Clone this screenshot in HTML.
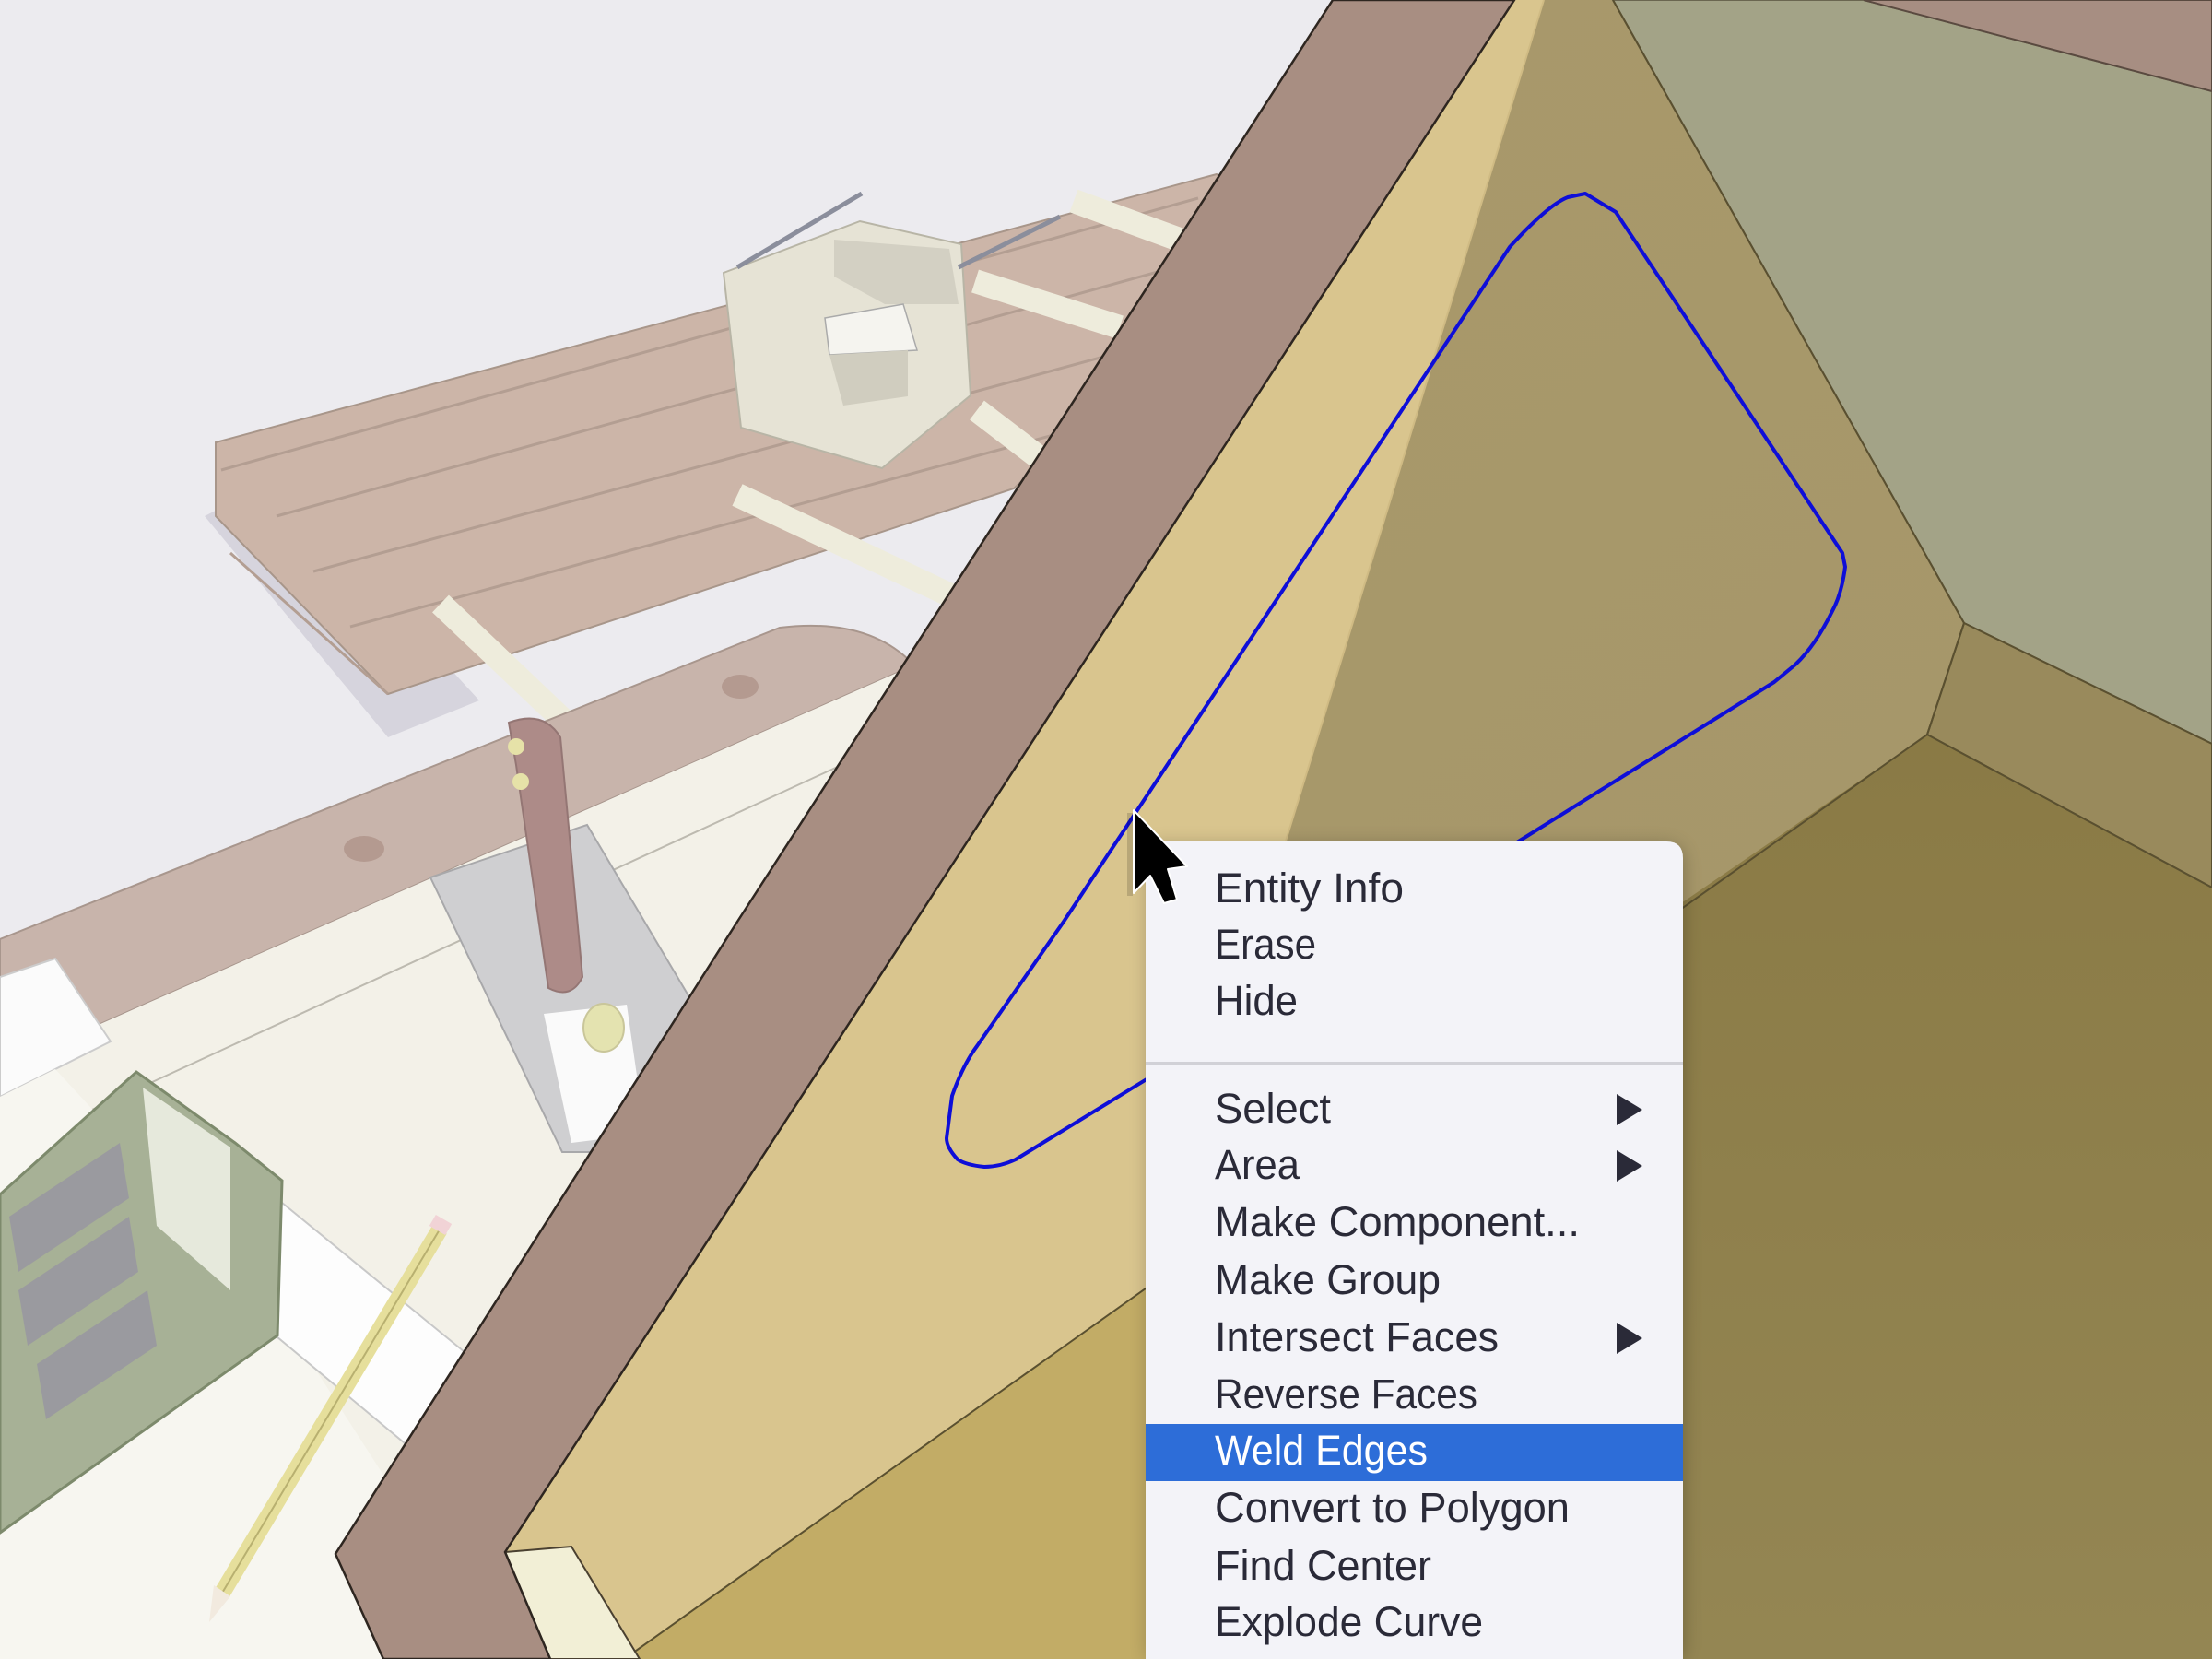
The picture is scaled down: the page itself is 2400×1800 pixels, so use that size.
<!DOCTYPE html>
<html><head><meta charset="utf-8"><style>
html,body{margin:0;padding:0;width:2400px;height:1800px;overflow:hidden;background:#ebeaef}
svg{display:block}
</style></head><body>
<svg width="2400" height="1800" viewBox="0 0 2400 1800" xmlns="http://www.w3.org/2000/svg">
<defs>
<linearGradient id="tan" x1="0" y1="0" x2="1" y2="1"><stop offset="0" stop-color="#a99a6c"/><stop offset="1" stop-color="#a59568"/></linearGradient>
<linearGradient id="olive" x1="0" y1="0" x2="0" y2="1"><stop offset="0" stop-color="#8a7a45"/><stop offset="1" stop-color="#948653"/></linearGradient>
<filter id="sh" x="-10%" y="-10%" width="120%" height="120%"><feGaussianBlur stdDeviation="10"/></filter>
</defs>
<rect width="2400" height="1800" fill="#ecebef"/>
<polygon points="222,560 421,800 520,760 300,520" fill="#d6d4dd"/>
<polygon points="234,480 1320,189 1400,250 1100,530 421,753 234,560" fill="#ccb5a8" stroke="#a8968a" stroke-width="2"/>
<g stroke="#b39e92" stroke-width="3" fill="none">
<line x1="240" y1="510" x2="1300" y2="215"/>
<line x1="300" y1="560" x2="1310" y2="280"/>
<line x1="340" y1="620" x2="1260" y2="370"/>
<line x1="380" y1="680" x2="1150" y2="470"/>
<line x1="250" y1="600" x2="421" y2="753"/>
</g>
<g stroke="#eeecdc" stroke-width="26" stroke-linecap="butt">
<line x1="478" y1="655" x2="615" y2="785"/>
<line x1="800" y1="537" x2="1040" y2="650"/>
<line x1="1060" y1="445" x2="1145" y2="510"/>
<line x1="1165" y1="218" x2="1285" y2="262"/>
<line x1="1058" y1="305" x2="1215" y2="355"/>
</g>
<polygon points="785,296 933,240 1043,265 1053,429 957,508 804,464" fill="#e6e3d5" stroke="#b8b5a6" stroke-width="2"/>
<polygon points="905,260 1030,270 1040,330 960,330 905,300" fill="#d3d0c3"/>
<polygon points="895,345 980,330 995,380 900,385" fill="#f5f4ef" stroke="#aaa" stroke-width="1.5"/>
<polygon points="900,385 985,380 985,430 915,440" fill="#d0cdbf"/>
<g stroke="#8b8e9c" stroke-width="5"><line x1="800" y1="290" x2="935" y2="210"/><line x1="1040" y1="290" x2="1150" y2="235"/></g>
<path d="M0,1019 L846,681 Q936,670 985,715 L980,727 L0,1159 Z" fill="#c8b4ab" stroke="#a8968d" stroke-width="2"/>
<path d="M0,1159 L980,727 L1060,700 L1200,640 L1200,1800 L0,1800 Z" fill="#f3f1e8"/>
<line x1="0" y1="1250" x2="913" y2="830" stroke="#bdbab0" stroke-width="2"/>
<ellipse cx="803" cy="745" rx="20" ry="13" fill="#b49a90"/>
<ellipse cx="395" cy="921" rx="22" ry="14" fill="#b49a90"/>
<polygon points="467,952 637,895 748,1082 650,1250 610,1250" fill="#cfcfd1" stroke="#a8a8aa" stroke-width="2"/>
<polygon points="590,1100 680,1090 700,1230 620,1240" fill="#fafafa"/>
<path d="M552,784 Q590,770 608,800 L632,1060 Q620,1085 595,1072 L560,830 Z" fill="#ad8b88" stroke="#947674" stroke-width="2"/>
<circle cx="560" cy="810" r="9" fill="#e6e2a8"/><circle cx="565" cy="848" r="9" fill="#e6e2a8"/>
<ellipse cx="655" cy="1115" rx="22" ry="26" fill="#e4e3b0" stroke="#c9c69a" stroke-width="2"/>
<polygon points="0,1060 60,1040 120,1130 0,1190" fill="#fbfbfb" stroke="#ccc" stroke-width="2"/>
<polygon points="0,1190 60,1160 300,1420 480,1700 420,1800 0,1800" fill="#f7f6f0"/>
<polygon points="300,1300 520,1480 480,1600 300,1450" fill="#fdfdfd" stroke="#c8c8c8" stroke-width="2"/>
<polygon points="0,1296 148,1163 255,1240 306,1281 301,1449 0,1663" fill="#a7b196" stroke="#7d8a6c" stroke-width="3"/>
<polygon points="155,1180 250,1245 250,1400 170,1330" fill="#e6e9dc"/>
<g fill="#9a9a9f"><polygon points="10,1320 130,1240 140,1300 20,1380"/><polygon points="20,1400 140,1320 150,1380 30,1460"/><polygon points="40,1480 160,1400 170,1460 50,1540"/></g>
<line x1="477" y1="1334" x2="240" y2="1730" stroke="#e6df9c" stroke-width="18"/>
<line x1="477" y1="1334" x2="240" y2="1730" stroke="#b8b070" stroke-width="2"/>
<polygon points="232,1720 250,1732 227,1760" fill="#f2eadf"/>
<rect x="468" y="1322" width="20" height="14" fill="#f1d3d6" transform="rotate(30 478 1329)"/>
<polygon points="1643,0 2400,0 2400,1800 600,1800 548,1684 993,1000" fill="url(#tan)"/>
<polygon points="1750,0 2022,0 2400,99 2400,807 2131,676" fill="#a3a387" stroke="#6a6650" stroke-width="2"/>
<polygon points="2022,0 2400,0 2400,99" fill="#a78e82" stroke="#5a4a40" stroke-width="2"/>
<polygon points="2131,676 2400,807 2400,963 2091,797" fill="#998a5c" stroke="#5a5030" stroke-width="2"/>
<polygon points="1250,1393 1830,976 1826,1800 600,1800 683,1796" fill="#c2ac66"/>
<polygon points="2091,797 2400,963 2400,1800 1800,1800 1800,995 1830,976" fill="url(#olive)"/>
<line x1="2091" y1="797" x2="2400" y2="963" stroke="#5a5030" stroke-width="2"/>
<polygon points="1643,0 1675,0 1247,1395 683,1796 620,1678 548,1684 993,1000" fill="#d9c58e"/>
<line x1="1675" y1="0" x2="1247" y2="1395" stroke="#d0bb84" stroke-width="2"/>
<line x1="1750" y1="0" x2="2131" y2="676" stroke="#5a5030" stroke-width="2"/>
<line x1="2131" y1="676" x2="2091" y2="797" stroke="#5a5030" stroke-width="2"/>
<line x1="2091" y1="797" x2="1250" y2="1393" stroke="#5a5030" stroke-width="2"/>
<line x1="1250" y1="1393" x2="683" y2="1796" stroke="#5a5030" stroke-width="2"/>
<polygon points="548,1684 620,1678 694,1800 597,1800" fill="#f2efd6" stroke="#4a4030" stroke-width="2"/>
<polygon points="1446,0 1643,0 993,1000 548,1684 597,1800 416,1800 364,1686 800,1000" fill="#a88e82" stroke="#2e2620" stroke-width="2.5"/>
<path d="M1154,1000 L1638,268 Q1680,222 1701,214 L1720,210 L1753,230 L1999,600 L2002,615 Q1998,645 1988,663 Q1970,700 1948,721 L1925,740 L1649,912 L1244,1171 L1102,1258 Q1085,1266 1068,1266 Q1048,1264 1039,1258 Q1027,1245 1027,1235 L1033,1189 Q1045,1155 1060,1135 Z" fill="none" stroke="#0e0ed8" stroke-width="4" stroke-linejoin="round"/>
<path d="M1246,917 L1808,917 Q1826,917 1826,935 L1826,1800 L1246,1800 Z" fill="#000" opacity="0.25" filter="url(#sh)"/>
<path d="M1243,913 L1808,913 Q1826,913 1826,931 L1826,1800 L1243,1800 Z" fill="#f3f3f8"/>
<rect x="1243" y="1152" width="583" height="3" fill="#d1d1d7"/>
<rect x="1243" y="1545" width="583" height="62" fill="#2d6dd8"/>
<g font-family="'Liberation Sans',sans-serif" font-size="45" fill="#2a2a38">
<text x="1318" y="979" textLength="205" lengthAdjust="spacingAndGlyphs">Entity Info</text>
<text x="1318" y="1040" textLength="110" lengthAdjust="spacingAndGlyphs">Erase</text>
<text x="1318" y="1101" textLength="90" lengthAdjust="spacingAndGlyphs">Hide</text>
<text x="1318" y="1218" textLength="126" lengthAdjust="spacingAndGlyphs">Select</text>
<text x="1318" y="1279" textLength="92" lengthAdjust="spacingAndGlyphs">Area</text>
<text x="1318" y="1341" textLength="396" lengthAdjust="spacingAndGlyphs">Make Component...</text>
<text x="1318" y="1404" textLength="245" lengthAdjust="spacingAndGlyphs">Make Group</text>
<text x="1318" y="1466" textLength="308" lengthAdjust="spacingAndGlyphs">Intersect Faces</text>
<text x="1318" y="1528" textLength="285" lengthAdjust="spacingAndGlyphs">Reverse Faces</text>
<text x="1318" y="1589" textLength="231" lengthAdjust="spacingAndGlyphs" fill="#ffffff">Weld Edges</text>
<text x="1318" y="1651" textLength="385" lengthAdjust="spacingAndGlyphs">Convert to Polygon</text>
<text x="1318" y="1714" textLength="235" lengthAdjust="spacingAndGlyphs">Find Center</text>
<text x="1318" y="1775" textLength="291" lengthAdjust="spacingAndGlyphs">Explode Curve</text>
</g>
<g fill="#2a2a38">
<polygon points="1754,1187 1782,1204 1754,1221"/>
<polygon points="1754,1248 1782,1265 1754,1282"/>
<polygon points="1754,1435 1782,1452 1754,1469"/>
</g>
<path d="M1226,882 L1226,972" stroke="#000" stroke-opacity="0.15" stroke-width="6"/>
<path d="M1230,879 L1230,969 L1248,950 L1263,980 L1277,976 L1267,943 L1288,940 Z" fill="#000" stroke="#fff" stroke-width="2" stroke-linejoin="round"/>
</svg>
</body></html>
